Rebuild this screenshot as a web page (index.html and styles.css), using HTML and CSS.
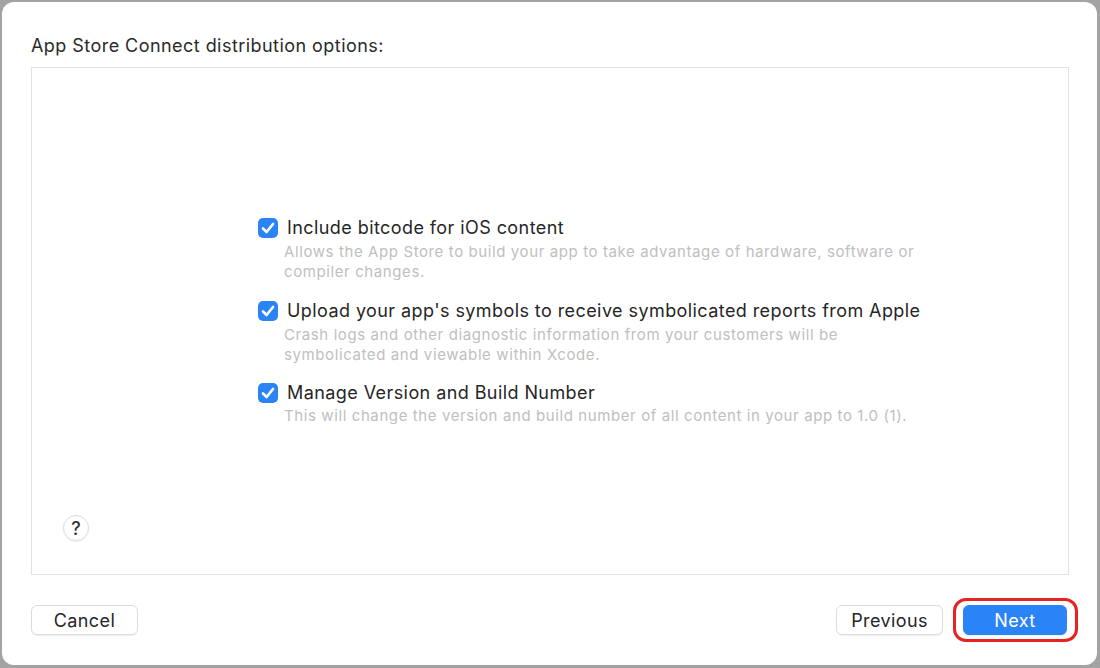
FILE: index.html
```html
<!DOCTYPE html>
<html>
<head>
<meta charset="utf-8">
<link rel="stylesheet" href="styles.css">
</head>
<body>
<div class="window">
  <div class="title">App Store Connect distribution options:</div>
  <div class="panel">
    <div class="options">
      <div class="option">
        <span class="check"><svg viewBox="0 0 20 20" width="20" height="20"><path d="M5 10.5 L8.6 14 L15 6" fill="none" stroke="#fff" stroke-width="2.6" stroke-linecap="round" stroke-linejoin="round"/></svg></span>
        <div class="opt-text">
          <div class="label">Include bitcode for iOS content</div>
          <div class="desc">Allows the App Store to build your app to take advantage of hardware, software or<br>compiler changes.</div>
        </div>
      </div>
      <div class="option">
        <span class="check"><svg viewBox="0 0 20 20" width="20" height="20"><path d="M5 10.5 L8.6 14 L15 6" fill="none" stroke="#fff" stroke-width="2.6" stroke-linecap="round" stroke-linejoin="round"/></svg></span>
        <div class="opt-text">
          <div class="label">Upload your app's symbols to receive symbolicated reports from Apple</div>
          <div class="desc">Crash logs and other diagnostic information from your customers will be<br>symbolicated and viewable within Xcode.</div>
        </div>
      </div>
      <div class="option">
        <span class="check"><svg viewBox="0 0 20 20" width="20" height="20"><path d="M5 10.5 L8.6 14 L15 6" fill="none" stroke="#fff" stroke-width="2.6" stroke-linecap="round" stroke-linejoin="round"/></svg></span>
        <div class="opt-text">
          <div class="label">Manage Version and Build Number</div>
          <div class="desc tight">This will change the version and build number of all content in your app to 1.0 (1).</div>
        </div>
      </div>
    </div>
    <div class="help">?</div>
  </div>
  <div class="footer">
    <button class="btn">Cancel</button>
    <div class="right">
      <button class="btn">Previous</button>
      <div class="highlight"><button class="btn primary">Next</button></div>
    </div>
  </div>
</div>
</body>
</html>
```
FILE: styles.css
```css
html, body {
  margin: 0;
  padding: 0;
  background: #a3a3a3;
  width: 1100px;
  height: 668px;
  overflow: hidden;
}
body {
  padding: 2px 3px 3px 2px;
  box-sizing: border-box;
  font-family: Inter, "Liberation Sans", sans-serif;
  color: #262626;
}
.window {
  background: #fff;
  border-radius: 12px;
  height: 663px;
  box-sizing: border-box;
  padding: 33px 28px 0 29px;
  display: flex;
  flex-direction: column;
}
.title {
  font-size: 18px;
  letter-spacing: 0.45px;
  line-height: 22px;
  height: 22px;
  margin-bottom: 10px;
  color: #2a2a2a;
}
.panel {
  border: 1px solid #e2e2e2;
  height: 508px;
  box-sizing: border-box;
  display: flex;
  flex-direction: column;
  padding: 0 0 0 31px;
}
.options {
  margin: 149px 0 0 195px;
  display: flex;
  flex-direction: column;
  gap: 18px;
}
.option {
  display: flex;
  align-items: flex-start;
  gap: 9px;
}
.option:last-child {
  margin-top: -1px;
}
.check {
  width: 20px;
  height: 20px;
  border-radius: 5px;
  background: #2a84f6;
  display: flex;
  margin-top: 1px;
  flex: none;
}
.label {
  font-size: 18px;
  letter-spacing: 0.42px;
  line-height: 22px;
  color: #262626;
}
.desc {
  font-size: 15px;
  letter-spacing: 0.6px;
  line-height: 20px;
  color: #c0c0c0;
  margin-left: -3px;
  margin-top: 3px;
}
.desc.tight {
  margin-top: 2px;
}
.help {
  margin-top: auto;
  margin-bottom: 33px;
  width: 26px;
  height: 26px;
  border-radius: 50%;
  border: 1px solid #dcdcdc;
  box-shadow: 0 1px 1px rgba(0,0,0,0.08);
  box-sizing: border-box;
  display: flex;
  align-items: center;
  justify-content: center;
  font-size: 18px;
  font-weight: 500;
  color: #333;
}
.footer {
  display: flex;
  justify-content: space-between;
  align-items: center;
  margin-top: 23px;
  margin-right: -9px;
}
.right {
  display: flex;
  align-items: center;
  gap: 10px;
}
.btn {
  font-family: Inter, "Liberation Sans", sans-serif;
  font-size: 18px;
  letter-spacing: 0.4px;
  height: 30px;
  width: 107px;
  padding: 0;
  border-radius: 6px;
  border: 1px solid #dcdcdc;
  background: #fff;
  color: #262626;
  box-shadow: 0 1px 1px rgba(0,0,0,0.06);
}
.highlight {
  border: 3px solid #e5231f;
  border-radius: 13px;
  padding: 4px 8px 4px 7px;
  display: flex;
}
.primary {
  background: #2a84f6;
  border-color: #2a84f6;
  color: #fff;
  width: 104px;
}
```
